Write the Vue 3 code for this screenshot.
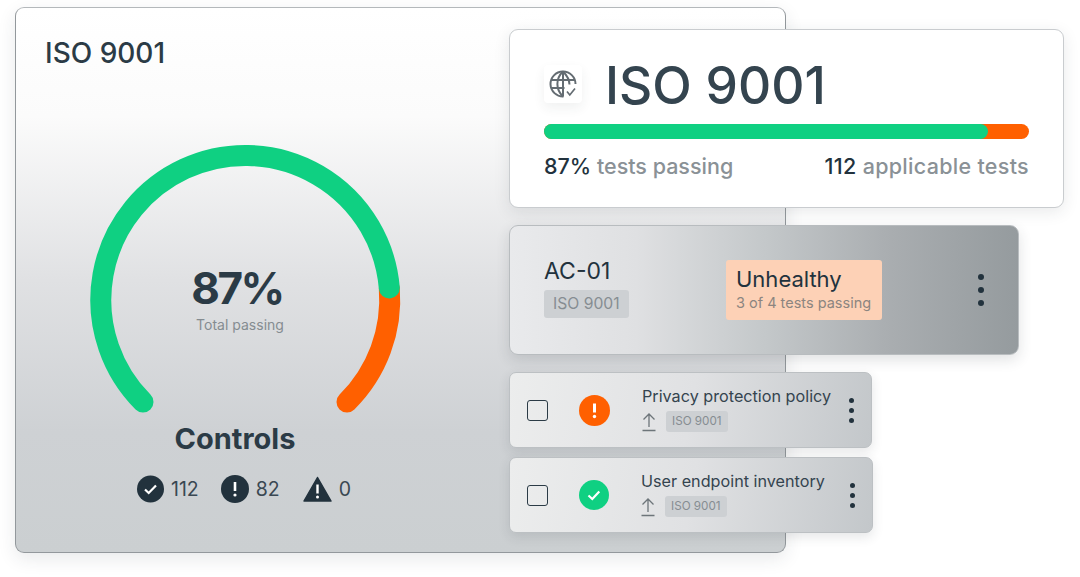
<template>
  <div class="stage">
    <section class="main-card">
      <h2 class="main-title">ISO 9001</h2>
      <div class="gauge">
        <svg width="320" height="280" viewBox="0 0 320 280">
          <path
            d="M 304.3 148 A 144.5 144.500 0 0 1 262 262"
            fill="none"
            stroke="#ff6000"
            stroke-width="21"
            stroke-linecap="round"
          />
          <path
            d="M 58 262 A 144.5 144.500 0 1 1 304.3 148"
            fill="none"
            stroke="#0fd082"
            stroke-width="21"
            stroke-linecap="round"
          />
        </svg>
        <div class="gauge-label">
          <div class="gauge-value">87%</div>
          <div class="gauge-caption">Total passing</div>
        </div>
      </div>
      <h3 class="controls-title">Controls</h3>
      <div class="stats">
        <div class="stat">
          <svg width="27" height="28" viewBox="0 0 27 28">
            <circle cx="13.500" cy="14" r="13.500" fill="#22323d" />
            <path d="M8 14.500l3.700 3.500 7.300-7.500" fill="none" stroke="#fff" stroke-width="2.200" />
          </svg>
          <span>112</span>
        </div>
        <div class="stat">
          <svg width="28" height="28" viewBox="0 0 28 28">
            <circle cx="14" cy="14" r="14" fill="#22323d" />
            <path d="M14 7v9" stroke="#fff" stroke-width="2.600" />
            <circle cx="14" cy="20" r="1.600" fill="#fff" />
          </svg>
          <span>82</span>
        </div>
        <div class="stat">
          <svg width="29" height="28" viewBox="0 0 29 28">
            <path d="M14.500 2.500L28 26H1z" fill="#22323d" stroke="#22323d" stroke-width="1.500" stroke-linejoin="round" />
            <path d="M14.500 9.500v9" stroke="#fff" stroke-width="2.400" />
            <circle cx="14.500" cy="22" r="1.500" fill="#fff" />
          </svg>
          <span>0</span>
        </div>
      </div>
    </section>

    <div class="overlay">
      <section class="summary-card">
        <div class="summary-head">
          <div class="globe-box">
            <svg width="28" height="28" viewBox="0 0 28 28" fill="none" stroke="#646c72" stroke-width="2">
              <path d="M26.500 14A12.500 12.500 0 1 0 14.500 26.500" />
              <path d="M14 1.500c-7.500 7-7.500 18 0 25M14 1.500c5 5 6.500 9 6.500 13" />
              <path d="M2.500 10h23M2.500 18h13M14 1.500v25" />
              <path d="M18 21.500l2.800 3.500 5.200-6.500" stroke-width="1.700" />
            </svg>
          </div>
          <h1 class="summary-title">ISO 9001</h1>
        </div>
        <div class="progress">
          <div class="progress-fill" :style="{ width: passing + '%' }"></div>
        </div>
        <div class="summary-foot">
          <span><b>87%</b> tests passing</span>
          <span class="foot-right"><b>112</b> applicable tests</span>
        </div>
      </section>

      <section class="control-card">
        <div class="control-id">
          <div class="control-name">AC-01</div>
          <span class="tag tag-large">ISO 9001</span>
        </div>
        <div class="health">
          <div class="health-title">Unhealthy</div>
          <div class="health-sub">3 of 4 tests passing</div>
        </div>
        <div class="dots dots-large"><i></i><i></i><i></i></div>
      </section>

      <section v-for="row in rows" :key="row.name" class="test-row" :class="row.cls">
        <span class="checkbox"></span>
        <span class="status" :class="row.status">
          <svg v-if="row.status === 'fail'" width="31" height="31" viewBox="0 0 31 31">
            <path d="M15.500 8.500v9" stroke="#fff" stroke-width="3" />
            <circle cx="15.500" cy="21.500" r="1.700" fill="#fff" />
          </svg>
          <svg v-else width="30" height="30" viewBox="0 0 30 30">
            <path d="M9.500 15.500l3.800 3.500 7-7.500" fill="none" stroke="#fff" stroke-width="2.200" />
          </svg>
        </span>
        <div class="test-body">
          <div class="test-name">{{ row.name }}</div>
          <div class="test-meta">
            <svg width="14" height="20" viewBox="0 0 14 20" fill="none" stroke="#6d757a" stroke-width="1.300">
              <path d="M7 15V2M1.500 7.500L7 2l5.500 5.500M0.500 18.500h13" />
            </svg>
            <span class="tag tag-small">ISO 9001</span>
          </div>
        </div>
        <div class="dots"><i></i><i></i><i></i></div>
      </section>
    </div>
  </div>
</template>

<script setup>
const passing = 91.5

const rows = [
  { name: 'Privacy protection policy', status: 'fail', cls: 'row-one' },
  { name: 'User endpoint inventory', status: 'pass', cls: 'row-two' }
]
</script>

<style>
html,
body {
  margin: 0;
  background: #fff;
}
</style>

<style scoped>
.stage {
  position: relative;
  width: 1080px;
  height: 577px;
  box-sizing: border-box;
  padding: 7px 0 0 15px;
  overflow: hidden;
  background: #fff;
  font-family: Inter, "Noto Sans", sans-serif;
  color: #2b3b46;
}

h1,
h2,
h3 {
  margin: 0;
  font-weight: 500;
}

.main-card {
  box-sizing: border-box;
  width: 771px;
  height: 546px;
  padding: 29px 0 0 29px;
  border: 1px solid #93989c;
  border-top-color: #b4b8bb;
  border-radius: 9px;
  background: linear-gradient(180deg, #fff 0%, #fbfbfb 20%, #e0e1e3 50%, #ced1d4 78%, #cbcfd1 100%);
  box-shadow: 0 6px 18px rgba(40, 50, 60, 0.1);
}

.main-title {
  font-size: 28px;
  line-height: 32px;
  color: #2b3b46;
}

.gauge {
  position: relative;
  width: 320px;
  height: 280px;
  margin: 71px 0 0 40px;
}

.gauge svg {
  display: block;
}

.gauge-label {
  position: absolute;
  left: 0;
  top: 123px;
  width: 320px;
  text-align: center;
}

.gauge-value {
  margin-left: -16px;
  font-size: 44px;
  line-height: 50px;
  font-weight: 700;
  letter-spacing: -2.500px;
  color: #2b3b46;
}

.gauge-caption {
  margin-top: 3px;
  margin-left: -10px;
  font-size: 14px;
  line-height: 18px;
  color: #858c91;
}

.controls-title {
  width: 320px;
  margin: 2px 0 0 30px;
  text-align: center;
  font-size: 29px;
  line-height: 34px;
  font-weight: 700;
  color: #2b3b46;
}

.stats {
  display: flex;
  align-items: center;
  gap: 22px;
  margin: 19px 0 0 92px;
}

.stat {
  display: flex;
  align-items: center;
  gap: 7px;
  font-size: 19.500px;
  line-height: 28px;
  color: #3a4852;
}

.stat svg {
  display: block;
}

.stat + .stat + .stat {
  margin-left: 1px;
}

.overlay {
  position: absolute;
  left: 509px;
  top: 29px;
  display: flex;
  flex-direction: column;
  align-items: flex-start;
}

.summary-card {
  box-sizing: border-box;
  width: 555px;
  height: 179px;
  padding: 27px 34px 0;
  border: 1px solid #c9cccf;
  border-radius: 9px;
  background: #fff;
  box-shadow: 0 4px 16px rgba(40, 50, 60, 0.1);
}

.summary-head {
  display: flex;
  align-items: center;
  gap: 23px;
  height: 56px;
}

.globe-box {
  display: flex;
  align-items: center;
  justify-content: center;
  width: 38px;
  height: 38px;
  margin-top: -2px;
  border-radius: 4px;
  background: #fff;
  box-shadow: 0 5px 12px rgba(40, 50, 60, 0.07);
}

.summary-title {
  font-size: 51.500px;
  line-height: 56px;
  font-weight: 550;
  color: #34444f;
}

.progress {
  height: 15px;
  margin-top: 11px;
  border-radius: 8px;
  background: #ff6000;
}

.progress-fill {
  height: 100%;
  border-radius: 8px;
  background: #0fd082;
}

.summary-foot {
  display: flex;
  justify-content: space-between;
  margin-top: 14px;
  font-size: 21.500px;
  line-height: 26px;
  font-weight: 500;
  color: #8a9196;
}

.foot-right {
  letter-spacing: 0.300px;
}

.summary-foot b {
  font-weight: 500;
  color: #22323d;
}

.control-card {
  display: flex;
  align-items: center;
  box-sizing: border-box;
  width: 510px;
  height: 130px;
  margin-top: 17px;
  padding: 0 34px;
  border: 1px solid #b8bcbf;
  border-radius: 9px;
  background: linear-gradient(90deg, #e9eaec 0%, #dfe0e2 25%, #c4c8ca 50%, #a9adb0 75%, #959b9e 100%);
  box-shadow: 0 5px 14px rgba(40, 50, 60, 0.14);
}

.control-id {
  width: 182px;
  margin-top: -6px;
}

.control-name {
  font-size: 23px;
  line-height: 28px;
  color: #22323d;
}

.tag {
  display: inline-block;
  border-radius: 3px;
  background: #cdd0d3;
  color: #868d92;
}

.tag-large {
  margin-top: 5px;
  padding: 0 9px;
  font-size: 15.700px;
  line-height: 28px;
}

.tag-small {
  padding: 0 6px;
  font-size: 11.700px;
  line-height: 21px;
}

.health {
  box-sizing: border-box;
  width: 156px;
  height: 60px;
  padding: 5px 10px;
  border-radius: 3px;
  background: #fdd1b6;
}

.health-title {
  font-size: 22px;
  line-height: 28px;
  color: #22323d;
}

.health-sub {
  font-size: 14.500px;
  line-height: 19px;
  white-space: nowrap;
  color: #8c8580;
}

.dots {
  display: flex;
  flex-direction: column;
  align-items: center;
  gap: 5px;
  margin-left: auto;
}

.dots i {
  display: block;
  width: 5px;
  height: 5px;
  border-radius: 50%;
  background: #22323d;
}

.dots-large {
  gap: 7px;
}

.dots-large i {
  width: 6px;
  height: 6px;
}

.test-row {
  display: flex;
  align-items: center;
  box-sizing: border-box;
  width: 363px;
  height: 76px;
  padding: 0 17px;
  border: 1px solid #bcc0c3;
  border-radius: 7px;
  background: linear-gradient(100deg, #eceded 0%, #e0e1e3 50%, #c3c7ca 100%);
  box-shadow: 0 4px 12px rgba(40, 50, 60, 0.12);
}

.row-one {
  margin-top: 17px;
}

.row-two {
  width: 364px;
  margin-top: 9px;
}

.checkbox {
  flex: none;
  box-sizing: border-box;
  width: 21px;
  height: 21px;
  border: 1.500px solid #2b3b46;
  border-radius: 3px;
}

.status {
  flex: none;
  width: 31px;
  height: 31px;
  margin-left: 31px;
  border-radius: 50%;
}

.status svg {
  display: block;
}

.status.fail {
  background: #ff6000;
}

.status.pass {
  width: 30px;
  height: 30px;
  background: #0fd082;
}

.test-body {
  margin-left: 32px;
  margin-top: -2px;
}

.test-name {
  font-size: 16.200px;
  line-height: 20px;
  white-space: nowrap;
  color: #34444f;
}

.test-meta {
  display: flex;
  align-items: center;
  gap: 10px;
  margin-top: 5px;
}

.test-meta svg {
  display: block;
}
</style>
